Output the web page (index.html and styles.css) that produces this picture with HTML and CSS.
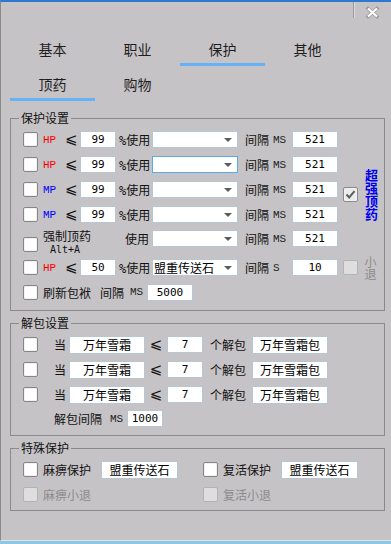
FILE: index.html
```html
<!DOCTYPE html>
<html>
<head>
<meta charset="utf-8">
<link rel="stylesheet" href="styles.css">
</head>
<body>
<div class="window">
  <div class="titlebar">
    <div class="close">
      <svg width="13" height="11" viewBox="0 0 13 11"><path d="M2 1.5 L11 9.5 M11 1.5 L2 9.5" stroke="#9a9a9a" stroke-width="3.4" stroke-linecap="square"/><path d="M2 1.5 L11 9.5 M11 1.5 L2 9.5" stroke="#ffffff" stroke-width="2.2"/></svg>
    </div>
  </div>
  <div class="tabbar">
    <div class="tab">基本</div>
    <div class="tab">职业</div>
    <div class="tab active">保护</div>
    <div class="tab">其他</div>
  </div>
  <div class="tabbar tabbar-sub">
    <div class="tab active">顶药</div>
    <div class="tab">购物</div>
  </div>

  <div class="group g1">
    <div class="legend">保护设置</div>
    <div class="g1-grid">
      <div class="row">
        <span class="cb"></span>
        <span class="stat hp">HP</span>
        <span class="le">⩽</span>
        <span class="field f-num">99</span>
        <span class="pct"><span class="mono">%</span>使用</span>
        <span class="combo"><span class="combo-text"></span><span class="arrow"></span></span>
        <span class="lbl-gap">间隔</span>
        <span class="unit">MS</span>
        <span class="field f-ms">521</span>
      </div>
      <div class="row">
        <span class="cb"></span>
        <span class="stat hp">HP</span>
        <span class="le">⩽</span>
        <span class="field f-num">99</span>
        <span class="pct"><span class="mono">%</span>使用</span>
        <span class="combo focus"><span class="combo-text"></span><span class="arrow"></span></span>
        <span class="lbl-gap">间隔</span>
        <span class="unit">MS</span>
        <span class="field f-ms">521</span>
      </div>
      <div class="row">
        <span class="cb"></span>
        <span class="stat mp">MP</span>
        <span class="le">⩽</span>
        <span class="field f-num">99</span>
        <span class="pct"><span class="mono">%</span>使用</span>
        <span class="combo"><span class="combo-text"></span><span class="arrow"></span></span>
        <span class="lbl-gap">间隔</span>
        <span class="unit">MS</span>
        <span class="field f-ms">521</span>
      </div>
      <div class="row">
        <span class="cb"></span>
        <span class="stat mp">MP</span>
        <span class="le">⩽</span>
        <span class="field f-num">99</span>
        <span class="pct"><span class="mono">%</span>使用</span>
        <span class="combo"><span class="combo-text"></span><span class="arrow"></span></span>
        <span class="lbl-gap">间隔</span>
        <span class="unit">MS</span>
        <span class="field f-ms">521</span>
      </div>
      <div class="row r5">
        <span class="cb cb-low"></span>
        <span class="force"><span class="force-name">强制顶药</span><span class="hotkey">Alt+A</span></span>
        <span class="sub">
          <span class="use">使用</span>
          <span class="combo"><span class="combo-text"></span><span class="arrow"></span></span>
          <span class="lbl-gap">间隔</span>
          <span class="unit">MS</span>
          <span class="field f-ms">521</span>
        </span>
      </div>
      <div class="row">
        <span class="cb"></span>
        <span class="stat hp">HP</span>
        <span class="le">⩽</span>
        <span class="field f-num">50</span>
        <span class="pct"><span class="mono">%</span>使用</span>
        <span class="combo"><span class="combo-text">盟重传送石</span><span class="arrow"></span></span>
        <span class="lbl-gap">间隔</span>
        <span class="unit">S</span>
        <span class="field f-ms">10</span>
      </div>
      <div class="row">
        <span class="cb"></span>
        <span class="refresh">刷新包袱</span>
        <span class="gap2">间隔</span>
        <span class="unit u2">MS</span>
        <span class="field f-ms">5000</span>
      </div>
      <div class="side super">
        <span class="cb checked"><svg width="13" height="13" viewBox="0 0 13 13"><path d="M2.5 6.5 L5.2 9.5 L10.5 3.2" fill="none" stroke="#5e5e5e" stroke-width="2"/></svg></span>
        <span class="vtext vblue">超强顶药</span>
      </div>
      <div class="side quit">
        <span class="cb disabled"></span>
        <span class="vtext vgray">小退</span>
      </div>
    </div>
  </div>

  <div class="group g2">
    <div class="legend">解包设置</div>
    <div class="row r25">
      <span class="cb"></span>
      <span class="dang">当</span>
      <span class="field f-item">万年雪霜</span>
      <span class="le2">⩽</span>
      <span class="field f-num">7</span>
      <span class="unpack">个解包</span>
      <span class="field f-item">万年雪霜包</span>
    </div>
    <div class="row r25">
      <span class="cb"></span>
      <span class="dang">当</span>
      <span class="field f-item">万年雪霜</span>
      <span class="le2">⩽</span>
      <span class="field f-num">7</span>
      <span class="unpack">个解包</span>
      <span class="field f-item">万年雪霜包</span>
    </div>
    <div class="row r25">
      <span class="cb"></span>
      <span class="dang">当</span>
      <span class="field f-item">万年雪霜</span>
      <span class="le2">⩽</span>
      <span class="field f-num">7</span>
      <span class="unpack">个解包</span>
      <span class="field f-item">万年雪霜包</span>
    </div>
    <div class="row r23">
      <span class="interval">解包间隔</span>
      <span class="unit u2">MS</span>
      <span class="field f-num">1000</span>
    </div>
  </div>

  <div class="group g3">
    <div class="legend">特殊保护</div>
    <div class="g3-grid">
      <div class="row">
        <span class="cb"></span>
        <span class="plabel">麻痹保护</span>
        <span class="field f-stone">盟重传送石</span>
      </div>
      <div class="row">
        <span class="cb"></span>
        <span class="plabel">复活保护</span>
        <span class="field f-stone">盟重传送石</span>
      </div>
      <div class="row">
        <span class="cb disabled"></span>
        <span class="plabel dim">麻痹小退</span>
      </div>
      <div class="row">
        <span class="cb disabled"></span>
        <span class="plabel dim">复活小退</span>
      </div>
    </div>
  </div>
</div>
</body>
</html>
```

FILE: styles.css
```css
* { box-sizing: border-box; margin: 0; padding: 0; }
html, body { width: 391px; height: 544px; overflow: hidden; }
body {
  background: #8cc8e6;
  font-family: "Noto Sans CJK SC", "Noto Sans", sans-serif;
  font-size: 12px;
  color: #111;
}
.window {
  width: 391px;
  height: 541px;
  background: #c6c3c6;
  border-top: 2px solid #2c78d2;
  border-left: 1px solid #8a8a8a;
  border-bottom: 1px solid #e4e4e4;
}
.titlebar { height: 33px; display: flex; justify-content: flex-end; align-items: flex-start; }
.close {
  width: 38px; height: 16px;
  border-left: 1px solid #9a9a9a;
  box-shadow: inset 1px 0 0 #dcdcdc;
  display: flex; justify-content: center; align-items: flex-start;
  padding-top: 5px;
}
.close svg { display: block; overflow: visible; }
.tabbar { display: flex; padding-left: 9px; }
.tabbar-sub { margin-top: 4px; }
.tab {
  width: 85px; height: 31px; line-height: 28px;
  text-align: center; font-size: 14px; color: #1e1e1e;
  border-bottom: 3px solid transparent;
}
.tab.active { border-bottom-color: #66b2f6; }

.group {
  position: relative;
  margin-left: 9px;
  width: 375px;
  border: 1px solid #8a8a8a;
  padding: 8px 0 0 12px;
}
.legend {
  position: absolute; top: -9px; left: 8px;
  height: 16px; line-height: 16px;
  padding: 0 2px; background: #c6c3c6;
}
.g1 { margin-top: 17px; padding-bottom: 6px; }
.g2 { margin-top: 12px; padding-bottom: 5px; }
.g3 { margin-top: 12px; padding-bottom: 3px; }

.g1-grid {
  display: grid;
  grid-template-columns: 315px 1fr;
  grid-template-rows: 25px 25px 25px 25px 28px 25px 24px;
}
.g1-grid > .row { grid-column: 1; }
.row { display: flex; align-items: center; white-space: nowrap; }
.r5 { align-items: flex-start; }
.r25 { height: 25px; }
.r23 { height: 23px; }

.cb {
  flex: none; width: 15px; height: 15px;
  border: 1px solid #858585; border-radius: 2px;
  background: #fff;
  box-shadow: inset 0 0 0 1px #f2f2f2;
  display: flex; align-items: center; justify-content: center;
}
.cb.checked { background: #ececec; border-color: #8a8a8a; }
.cb.checked svg { display: block; }
.cb.disabled { background: #dedede; border-color: #b3b3b3; box-shadow: none; }
.cb-low { margin-top: 10px; }

.mono { font-family: "DejaVu Sans Mono", monospace; font-size: 12px; }
.stat {
  flex: none; width: 27px; padding-left: 5px;
  font-family: "Liberation Mono", monospace; font-size: 11px;
}
.hp { color: #ff0000; }
.mp { color: #0000ff; }
.le { flex: none; width: 15px; line-height: 17px; font-family: "DejaVu Sans", sans-serif; font-size: 15px; }
.le2 { flex: none; width: 22px; line-height: 17px; text-align: center; font-family: "DejaVu Sans", sans-serif; font-size: 15px; }

.field {
  flex: none;
  display: flex; align-items: center; justify-content: center;
  height: 17px;
  background: #fff;
  border: 1px solid #b7c6d3;
  font-family: "DejaVu Sans Mono", monospace; font-size: 11px; color: #000;
}
.f-num { width: 36px; }
.f-ms { width: 46px; }
.f-item { width: 76px; height: 18px; font-family: "Noto Sans CJK SC", sans-serif; font-size: 12px; }
.f-stone { width: 77px; height: 18px; font-family: "Noto Sans CJK SC", sans-serif; font-size: 12px; }

.pct { flex: none; width: 36px; padding-left: 3px; }
.combo {
  flex: none; width: 86px; height: 17px;
  background: #fff; border: 1px solid #b7c6d3;
  display: flex; align-items: center; justify-content: space-between;
  padding: 0 5px 0 1px;
  font-size: 12px;
}
.combo.focus { border-color: #5aa9ea; }
.combo-text { line-height: 15px; color: #000; }
.arrow {
  width: 0; height: 0;
  border-top: 4px solid #5c5c5c;
  border-left: 4px solid transparent;
  border-right: 4px solid transparent;
}
.lbl-gap { flex: none; width: 35px; padding-left: 7px; }
.unit { flex: none; width: 19px; font-family: "Liberation Mono", monospace; font-size: 11px; color: #222; }
.u2 { width: 17px; }

.force { flex: none; width: 87px; padding-left: 5px; display: flex; flex-direction: column; margin-top: 1px; }
.force-name { line-height: 16px; }
.hotkey { line-height: 12px; font-family: "DejaVu Sans Mono", monospace; font-size: 10px; padding-left: 7px; }
.sub { display: flex; align-items: center; height: 17px; margin-top: 3px; }
.use { flex: none; width: 27px; }

.refresh { flex: none; width: 62px; padding-left: 5px; }
.gap2 { flex: none; width: 30px; }

.side { display: flex; align-items: center; padding-left: 5px; }
.super { grid-column: 2; grid-row: 2 / 5; padding-top: 10px; }
.quit { grid-column: 2; grid-row: 6; }
.vtext { writing-mode: vertical-rl; margin-left: 6px; }
.vblue { font-size: 13px; font-weight: bold; color: #0000f0; line-height: 14px; }
.vgray { font-size: 12px; color: #8b8b8b; line-height: 13px; }

.dang { flex: none; width: 31px; padding-left: 16px; }
.unpack { flex: none; width: 49px; padding-left: 7px; }
.interval { flex: none; width: 87px; padding-left: 31px; }

.g3-grid { display: grid; grid-template-columns: 180px 1fr; grid-auto-rows: 25px; }
.plabel { flex: none; width: 63px; padding-left: 5px; }
.dim { color: #8b8b8b; }
```
